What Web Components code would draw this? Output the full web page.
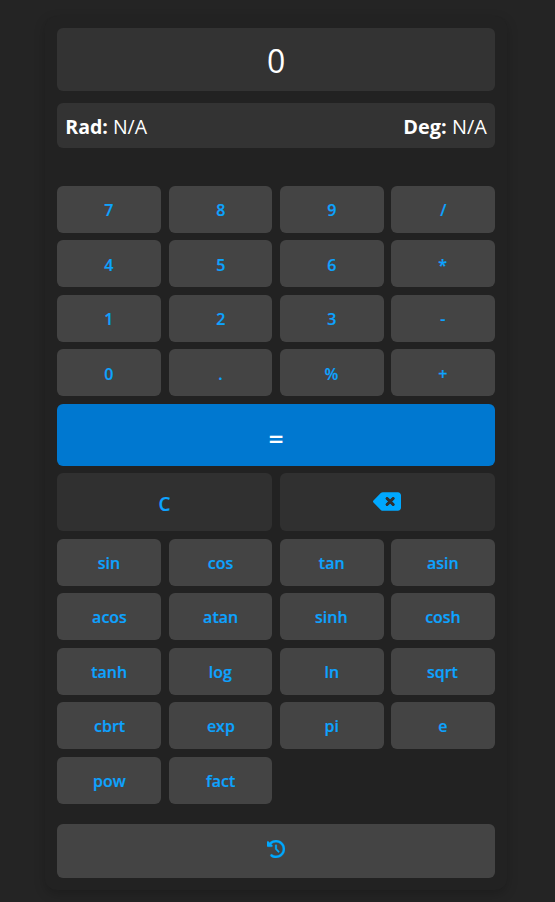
<!DOCTYPE html>
<html lang="en">
<head>
<meta charset="utf-8">
<title>Scientific calculator</title>
<style>
html,body{margin:0;height:100%;background:#242424}
body{color:#fff;font-family:"Open Sans","Noto Sans",sans-serif;overflow:hidden;box-sizing:border-box;padding:16px 48.2px 12px 45.3px}
</style>
</head>
<body>
<calc-app></calc-app>
<script>
const define = (name, html) => {
  const t = document.createElement('template');
  t.innerHTML = html;
  customElements.define(name, class extends HTMLElement {
    constructor() {
      super();
      this.attachShadow({ mode: 'open' }).append(t.content.cloneNode(true));
    }
  });
};

define('calc-display', `<style>
:host{display:flex;align-items:center;justify-content:center;height:63px;box-sizing:border-box;padding-top:2px;background:#333;border-radius:6px;font-size:32px;line-height:43px}
span{display:block}
</style><span><slot></slot></span>`);

define('angle-value', `<style>
:host{display:block;transform:scaleX(var(--fit,1));transform-origin:var(--origin,left)}
b{font-weight:700}
</style><b><slot name="label"></slot></b> <slot></slot>`);

define('angle-bar', `<style>
:host{display:flex;align-items:center;justify-content:space-between;height:45px;box-sizing:border-box;padding:1px 8px 0;margin-top:12px;background:#333;border-radius:6px;font-size:19.5px;line-height:27px}
</style><slot></slot>`);

define('calc-key', `<style>
:host{display:flex;align-items:center;justify-content:center;height:47px;box-sizing:border-box;padding-top:1.6px;background:#444;border-radius:6px;color:#0da3ff;font-size:17px;font-weight:600;line-height:24px;-webkit-text-stroke:.2px currentColor}
:host([kind=equals]){grid-column:span 4;height:61.9px;background:#0078d0;color:#fff;font-size:25px;padding-top:7px;-webkit-text-stroke:0}
:host([kind=equals]) span{transform:scaleX(1.06)}
:host([kind=wide]){grid-column:span 2;height:57.9px;background:#303030;font-size:20px;padding-top:3.4px}
:host([kind=history]){height:54px;margin-top:20.1px;padding:0 0 4px}
span{display:block;transform:scaleX(.94)}
::slotted(calc-icon){display:block}
:host([kind=history]) span,:host([icon]) span{transform:none}
:host([icon]){padding:0 0 1px!important}
</style><span><slot></slot></span>`);

define('calc-grid', `<style>
:host{display:grid;grid-template-columns:repeat(4,1fr);gap:7.5px;margin-top:37.9px}
</style><slot></slot>`);

const icons = {
  backspace: '<svg width="28" height="25" viewBox="0 0 576 512"><path fill="#00a8ff" d="M576 128c0-35.300-28.700-64-64-64H205.300c-17 0-33.300 6.700-45.300 18.700L9.400 233.400c-6 6-9.400 14.100-9.400 22.600s3.400 16.600 9.400 22.600L160 429.300c12 12 28.300 18.700 45.300 18.700H512c35.300 0 64-28.700 64-64V128zM271 175c9.400-9.400 24.600-9.400 33.900 0l47 47 47-47c9.400-9.400 24.600-9.400 33.900 0s9.400 24.600 0 33.900l-47 47 47 47c9.400 9.400 9.400 24.600 0 33.900s-24.600 9.400-33.900 0l-47-47-47 47c-9.400 9.400-24.600 9.400-33.900 0s-9.400-24.600 0-33.900l47-47-47-47c-9.400-9.400-9.400-24.600 0-33.900z"/><path fill="none" stroke="#303030" stroke-width="60" stroke-linecap="round" d="M289 193l126 126M415 193L289 319"/></svg>',
  history: '<svg width="18" height="18" viewBox="0 0 512 512"><path fill="#00a8ff" stroke="#00a8ff" stroke-width="8" d="M75 75L41 41C25.900 25.900 0 36.600 0 57.900V168c0 13.300 10.700 24 24 24H134.100c21.400 0 32.100-25.900 17-41l-30.800-30.800C155 85.500 203 64 256 64c106 0 192 86 192 192s-86 192-192 192c-40.800 0-78.600-12.700-109.700-34.400-14.500-10.100-34.400-6.600-44.600 7.900s-6.600 34.400 7.900 44.600C151.200 495 201.700 512 256 512c141.400 0 256-114.600 256-256S397.400 0 256 0C185.300 0 121.300 28.700 75 75zm181 53c-13.300 0-24 10.700-24 24V256c0 6.400 2.500 12.500 7 17l72 72c9.400 9.400 24.600 9.400 33.900 0s9.400-24.600 0-33.900l-65-65V152c0-13.300-10.700-24-24-24z"/></svg>'
};
customElements.define('calc-icon', class extends HTMLElement {
  connectedCallback() {
    if (!this.shadowRoot) this.attachShadow({ mode: 'open' }).innerHTML =
      '<style>:host{display:block}svg{display:block}</style>' + icons[this.getAttribute('name')];
  }
});

const keys = list => list.split(' ').map(k => '<calc-key>' + k + '</calc-key>').join('');
define('calc-app', `<style>
:host{display:block;height:874px;box-sizing:border-box;padding:12px;background:#222;border-radius:12px;box-shadow:0 4px 12px rgba(0,0,0,.2)}
angle-value:last-child{--origin:right;--fit:1.02}
</style>
<calc-display>0</calc-display>
<angle-bar>
  <angle-value><span slot="label">Rad:</span>N/A</angle-value>
  <angle-value><span slot="label">Deg:</span>N/A</angle-value>
</angle-bar>
<calc-grid>
  ${keys('7 8 9 / 4 5 6 * 1 2 3 - 0 . % +')}
  <calc-key kind="equals">=</calc-key>
  <calc-key kind="wide">C</calc-key>
  <calc-key kind="wide" icon><calc-icon name="backspace"></calc-icon></calc-key>
  ${keys('sin cos tan asin acos atan sinh cosh tanh log ln sqrt cbrt exp pi e pow fact')}
</calc-grid>
<calc-key kind="history"><calc-icon name="history"></calc-icon></calc-key>`);
</script>
</body>
</html>
